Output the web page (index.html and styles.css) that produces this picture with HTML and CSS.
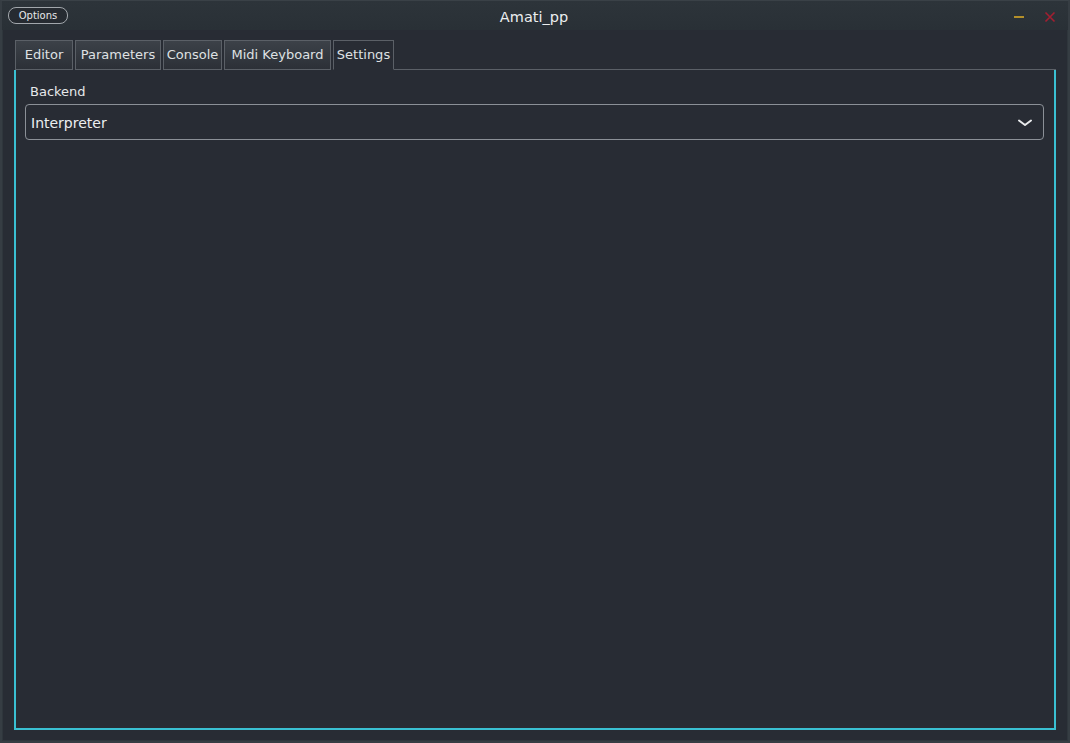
FILE: index.html
```html
<!DOCTYPE html>
<html>
<head>
<meta charset="utf-8">
<link rel="stylesheet" href="styles.css">
</head>
<body>
<div class="window">
  <div class="titlebar">
    <div class="left"><button class="options">Options</button></div>
    <div class="title">Amati_pp</div>
    <div class="winbtns">
      <svg class="min" width="12" height="12" viewBox="0 0 12 12"><rect x="1" y="5" width="10" height="2" fill="#b38f2a"/></svg>
      <svg class="close" width="12" height="12" viewBox="0 0 12 12"><path d="M1.5 1.5 L10.5 10.5 M10.5 1.5 L1.5 10.5" stroke="#a21f31" stroke-width="1.6" fill="none"/></svg>
    </div>
  </div>
  <div class="content">
    <div class="tabs">
      <div class="tab t-editor">Editor</div>
      <div class="tab t-params">Parameters</div>
      <div class="tab t-console">Console</div>
      <div class="tab t-midi">Midi Keyboard</div>
      <div class="tab t-settings active">Settings</div>
      <div class="tabfill"></div>
    </div>
    <div class="panel">
      <div class="label">Backend</div>
      <div class="combo">
        <span>Interpreter</span>
        <svg width="16" height="10" viewBox="0 0 16 10"><path d="M2 2.5 L8 7 L14 2.5" stroke="#e8eaec" stroke-width="2" fill="none" stroke-linecap="round" stroke-linejoin="round"/></svg>
      </div>
    </div>
  </div>
</div>
</body>
</html>
```
FILE: styles.css
```css
html, body {
  margin: 0;
  padding: 0;
  background: #282c34;
}
body {
  width: 1070px;
  height: 743px;
  overflow: hidden;
  font-family: "DejaVu Sans", sans-serif;
  color: #e6e8ea;
}
.window {
  box-sizing: border-box;
  width: 1070px;
  height: 743px;
  border: 2px solid #363d43;
  border-top: 1px solid #3a4147;
  background: #282c34;
  display: flex;
  flex-direction: column;
  box-shadow: inset 0 0 0 1px #2f363c;
}
.titlebar {
  height: 29px;
  flex: none;
  display: grid;
  grid-template-columns: 1fr auto 1fr;
  align-items: center;
  background: linear-gradient(#2d343a, #293036);
  padding: 0 6px;
}
.left {
  display: flex;
  align-items: center;
}
.options {
  font-family: "DejaVu Sans", sans-serif;
  font-size: 10px;
  color: #e6e8ea;
  background: #262b31;
  border: 1px solid #a2a7ac;
  border-radius: 8px;
  height: 17px;
  width: 60px;
  padding: 0;
  margin-top: 0;
  line-height: 14px;
}
.title {
  text-align: center;
  font-size: 14.5px;
  color: #eceef0;
  margin-top: 2px;
  padding-right: 2px;
}
.winbtns {
  display: flex;
  justify-content: flex-end;
  gap: 19px;
  align-items: center;
  margin-right: 6px;
  margin-top: 2px;
}
.content {
  flex: 1;
  display: flex;
  flex-direction: column;
  padding: 10px 12px 11px 12px;
}
.tabs {
  display: flex;
  height: 30px;
  flex: none;
  gap: 2px;
  padding-left: 1px;
}
.tab {
  box-sizing: border-box;
  height: 30px;
  font-size: 13px;
  line-height: 28px;
  text-align: center;
  color: #dfe1e3;
  border: 1px solid #5b6067;
  background: linear-gradient(#3c4148, #2c3037);
}
.t-editor { width: 58px; }
.t-params { width: 86px; }
.t-console { width: 59px; }
.t-midi { width: 107px; }
.t-settings { width: 61px; }
.tab.active {
  background: #282c34;
  border-bottom-color: #282c34;
}
.tabfill {
  flex: 1;
  border-bottom: 1px solid #5b6067;
  margin-left: -2px;
}
.panel {
  flex: 1;
  border: 2px solid #3ac0d2;
  border-top: none;
  padding: 12px 10px 12px 9px;
  display: flex;
  flex-direction: column;
}
.label {
  font-size: 13px;
  color: #e6e8ea;
  padding-left: 5px;
  height: 19px;
  line-height: 16px;
  margin-top: 2px;
}
.combo {
  box-sizing: border-box;
  height: 36px;
  margin-top: 1px;
  border: 1px solid #8b9097;
  border-radius: 4px;
  display: flex;
  align-items: center;
  justify-content: space-between;
  padding: 2px 10px 0 5px;
  font-size: 14px;
  color: #eceef0;
}
```
